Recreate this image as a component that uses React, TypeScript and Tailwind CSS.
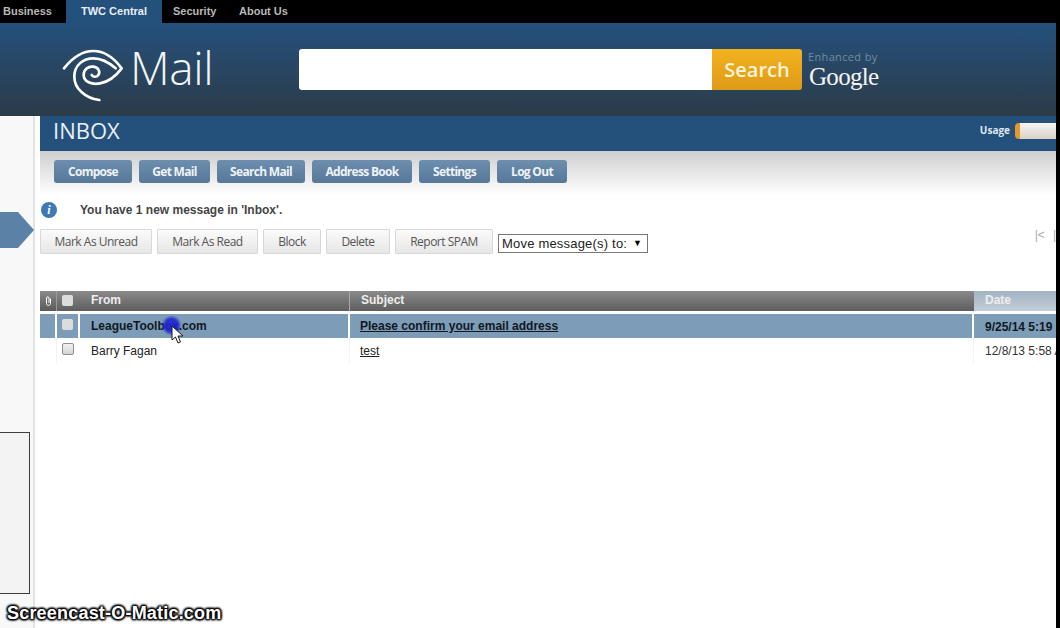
const NAV_ITEMS = ['Business', 'TWC Central', 'Security', 'About Us'];

const MAIN_BUTTONS = [
  { label: 'Compose', width: 'w-[78px]' },
  { label: 'Get Mail', width: 'w-[71px]' },
  { label: 'Search Mail', width: 'w-[88px]' },
  { label: 'Address Book', width: 'w-[100px]' },
  { label: 'Settings', width: 'w-[71px]' },
  { label: 'Log Out', width: 'w-[70px]' },
];

const ACTION_BUTTONS = [
  { label: 'Mark As Unread', width: 'w-[112px]' },
  { label: 'Mark As Read', width: 'w-[101px]' },
  { label: 'Block', width: 'w-[58px]' },
  { label: 'Delete', width: 'w-[64px]' },
  { label: 'Report SPAM', width: 'w-[98px]' },
];

function TwcLogo() {
  return (
    <svg width="72" height="70" viewBox="0 0 216 210" fill="none" stroke="#ffffff" strokeWidth="8" strokeLinecap="round" strokeLinejoin="round">
      <path d="M27 85 C55 50 85 33 115 33 C150 33 180 58 200 85 C185 105 165 125 135 130 C110 135 86 125 86 105 C86 88 100 78 115 80 C130 82 137 95 130 105 C125 112 115 112 110 105" />
      <path d="M133 180 C90 175 58 145 58 110 C58 75 85 55 115 55 C145 55 165 70 182 85" />
    </svg>
  );
}

function ClipIcon() {
  return (
    <svg width="7" height="10" viewBox="0 0 7 10" fill="none" stroke="#ffffff" strokeWidth="1">
      <path d="M5.5 2.5 V7.5 C5.5 10 1.5 10 1.5 7.5 V2 C1.5 0.4 4 0.4 4 2 V7" />
    </svg>
  );
}

function Checkbox({ onHeader }: { onHeader?: boolean }) {
  return (
    <span
      className={
        onHeader
          ? 'block h-[11px] w-[11px] rounded-[2px] bg-[#dcdcdc]'
          : 'block h-[12px] w-[12px] rounded-[2px] border border-[#8f8f8f] bg-gradient-to-b from-[#f2f2f2] to-[#d4d4d4]'
      }
    />
  );
}

export default function App() {
  return (
    <div className="flex h-[628px] w-[1060px] overflow-hidden bg-black">
      <div className="relative h-full w-[1056px] shrink-0 overflow-hidden bg-white [font-family:'Liberation_Sans',Arial,sans-serif]">
        {/* Top nav */}
        <div className="flex h-[23px] bg-black text-[11px] font-bold text-[#b8b8b8]">
          <div className="flex w-[66px] items-center pl-[3px]">{NAV_ITEMS[0]}</div>
          <div className="flex w-[96px] items-center justify-center bg-[#24507c] text-[#e8eef4]">{NAV_ITEMS[1]}</div>
          <div className="flex w-[77px] items-center pl-[11px]">{NAV_ITEMS[2]}</div>
          <div className="flex items-center">{NAV_ITEMS[3]}</div>
        </div>

        {/* Header with logo and search */}
        <div className="flex h-[93px] items-start bg-gradient-to-b from-[#24507c] to-[#2b3b48]">
          <div className="ml-[55px] mt-[17px] flex w-[244px] items-start">
            <TwcLogo />
            <span className="ml-[3px] mt-[-1px] text-[46px] font-light leading-[56px] tracking-[-0.4px] text-[#f2f5f7] [font-family:'Open_Sans',sans-serif]">
              Mail
            </span>
          </div>
          <div className="mt-[26px] flex h-[41px] w-[503px]">
            <div className="w-[413px] rounded-l-[3px] bg-white" />
            <div className="flex w-[90px] items-center justify-center rounded-r-[3px] bg-gradient-to-b from-[#f3b31f] to-[#dd9a18] text-[20px] font-semibold text-[#fdf3d8] [font-family:'Open_Sans',sans-serif]">
              Search
            </div>
          </div>
          <div className="ml-[6px] mt-[27px] flex flex-col">
            <span className="text-[11px] leading-[14px] tracking-[0.35px] text-[#6f8ba6] [font-family:'Open_Sans',sans-serif]">Enhanced by</span>
            <span className="ml-[1px] text-[25px] leading-[26px] tracking-[-0.7px] text-[#f4f4f4] [font-family:'Liberation_Serif',serif]">Google</span>
          </div>
        </div>

        <div className="flex h-[512px]">
          {/* Left rail */}
          <div className="w-[35px] shrink-0 border-r-2 border-[#e2e2e2] bg-[#f8f8f8]">
            <div className="mt-[316px] h-[162px] w-[30px] border border-l-0 border-[#3c3c3c] bg-[#f3f3f3]" />
          </div>

          {/* Mail column */}
          <div className="ml-[5px] min-w-0 flex-1">
            <div className="flex h-[35px] items-center justify-between bg-[#24507c] pb-[6px] pl-[13px]">
              <span className="text-[22px] text-[#e9eff5] [font-family:'Open_Sans',sans-serif]">INBOX</span>
              <div className="flex items-center gap-[5px]">
                <span className="text-[10px] font-bold text-[#dfe8f0] [font-family:'Open_Sans',sans-serif]">Usage</span>
                <div className="h-[16px] w-[41px] rounded-l-[4px] border-l-[5px] border-[#e39a2a] bg-gradient-to-b from-[#f5f5f5] to-[#d8d2c8]" />
              </div>
            </div>

            <div className="flex h-[44px] gap-[7px] bg-gradient-to-b from-[#cfcfcf] to-white pl-[14px] pt-[9px]">
              {MAIN_BUTTONS.map((b) => (
                <div
                  key={b.label}
                  className={`${b.width} flex h-[23px] items-center justify-center rounded-[3px] bg-gradient-to-b from-[#6d8eae] to-[#567899] text-[12px] font-bold tracking-[-0.7px] text-[#eef3f7] [font-family:'Open_Sans',sans-serif]`}
                >
                  {b.label}
                </div>
              ))}
            </div>

            <div className="flex h-[34px] items-center pb-[4px]">
              <span className="ml-[1px] flex h-[16px] w-[16px] items-center justify-center rounded-full bg-[#3f78b4] text-[12px] font-bold italic text-white [font-family:'Liberation_Serif',serif]">
                i
              </span>
              <span className="ml-[23px] text-[12px] font-bold text-[#444]">You have 1 new message in 'Inbox'.</span>
            </div>

            <div className="flex items-start">
              <div className="flex gap-[5px]">
                {ACTION_BUTTONS.map((b) => (
                  <div
                    key={b.label}
                    className={`${b.width} flex h-[25px] items-center justify-center rounded-[1px] border border-[#d8d8d8] bg-gradient-to-b from-[#fbfbfb] to-[#e6e6e6] text-[12px] tracking-[-0.5px] text-[#555] [font-family:'Open_Sans',sans-serif]`}
                  >
                    {b.label}
                  </div>
                ))}
              </div>
              <div className="ml-[5px] mt-[5px] flex h-[19px] w-[150px] items-center justify-between border border-[#777] bg-white pl-[3px] pr-[5px] text-[13px] tracking-[0.2px] text-[#222]">
                <span>Move message(s) to:</span>
                <span className="text-[9px] text-black">▼</span>
              </div>
              <div className="ml-auto flex shrink-0 gap-[8px] whitespace-nowrap text-[12px] leading-[12px] text-[#aaa]">
                <span>|&lt;</span>
                <span>|</span>
              </div>
            </div>

            {/* Message table */}
            <div className="mt-[37px] flex h-[20px] items-stretch text-[12px] font-bold text-[#eee]">
              <div className="flex w-[17px] items-center justify-center border-r border-[#999] bg-gradient-to-b from-[#8a8a8a] to-[#5a5a5a]">
                <ClipIcon />
              </div>
              <div className="flex w-[23px] items-center justify-center bg-gradient-to-b from-[#8a8a8a] to-[#5e5e5e] pb-[2px] pr-[2px]">
                <Checkbox onHeader />
              </div>
              <div className="flex w-[270px] items-center border-r border-[#aaa] bg-gradient-to-b from-[#8a8a8a] to-[#5e5e5e] pb-[2px] pl-[11px]">
                From
              </div>
              <div className="flex w-[624px] items-center bg-gradient-to-b from-[#8a8a8a] to-[#5e5e5e] pb-[2px] pl-[11px]">
                Subject
              </div>
              <div className="flex flex-1 items-center bg-gradient-to-b from-[#a3b3c2] to-[#c3ced8] pb-[2px] pl-[11px]">
                Date
              </div>
            </div>

            <div className="mt-[3px] flex h-[24px] bg-[#7d9cb8] text-[12px] font-bold text-[#10181f]">
              <div className="w-[17px] border-r-2 border-white" />
              <div className="flex w-[23px] justify-center border-r-2 border-white pt-[5px]">
                <Checkbox onHeader />
              </div>
              <div className="flex w-[270px] items-center border-r-2 border-white pl-[11px]">LeagueToolbox.com</div>
              <div className="flex w-[624px] items-center border-r-2 border-white pl-[10px] underline">
                Please confirm your email address
              </div>
              <div className="min-w-0 flex-1 overflow-hidden whitespace-nowrap pl-[11px] pt-[4px]">9/25/14 5:19 PM</div>
            </div>

            <div className="flex h-[25px] text-[12px] text-[#222]">
              <div className="w-[17px] border-r border-[#f4f4ee]" />
              <div className="flex w-[23px] justify-center pr-[2px] pt-[5px]">
                <Checkbox />
              </div>
              <div className="flex w-[270px] items-center border-r border-[#f4f4ee] pl-[11px]">Barry Fagan</div>
              <div className="flex w-[624px] items-center border-r border-[#f4f4ee] pl-[10px] underline">test</div>
              <div className="min-w-0 flex-1 overflow-hidden whitespace-nowrap pl-[11px] pt-[4px] text-[#333]">12/8/13 5:58 AM</div>
            </div>
          </div>
        </div>

        {/* Panel arrow */}
        <svg className="absolute left-0 top-[212px]" width="35" height="36" viewBox="0 0 35 36">
          <path d="M0 0 H18 L34 18 L18 36 H0 Z" fill="#5a82a6" />
        </svg>

        {/* Recorded cursor */}
        <div className="absolute left-[163px] top-[317px] h-[17px] w-[17px] rounded-full bg-[#1f24d0]/90 blur-[1px]" />
        <svg className="absolute left-[171px] top-[325px]" width="13" height="19" viewBox="0 0 13 19">
          <path d="M1 1 L1 15 L4.5 12 L7 18 L9.5 17 L7 11 L12 11 Z" fill="#ffffff" stroke="#1a1a1a" strokeWidth="1" />
        </svg>

        {/* Recorder watermark */}
        <div className="absolute left-[7px] top-[603px] text-[18px] font-bold leading-[20px] tracking-[0.2px] text-white [text-shadow:0_0_3px_#000,0_0_3px_#000,0_0_3px_#000,1px_1px_2px_#000,-1px_-1px_2px_#000,1px_-1px_2px_#000,-1px_1px_2px_#000]">
          Screencast-O-Matic.com
        </div>
      </div>
    </div>
  );
}
